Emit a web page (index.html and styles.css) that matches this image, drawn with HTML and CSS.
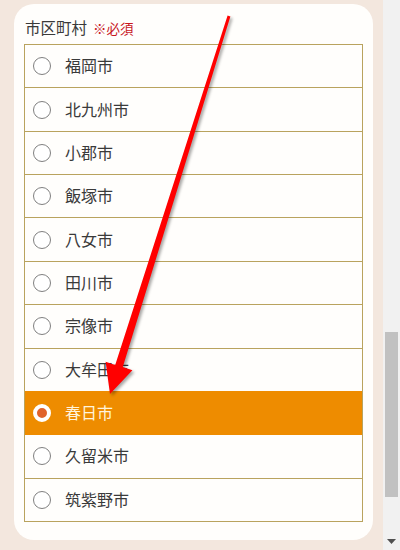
FILE: index.html
```html
<!DOCTYPE html>
<html lang="ja">
<head>
<meta charset="utf-8">
<link rel="stylesheet" href="styles.css">
</head>
<body>
<div class="page">
  <div class="card">
    <div class="head">市区町村<span class="req">※必須</span></div>
    <ul class="list">
      <li class="row"><span class="radio"></span>福岡市</li>
      <li class="row"><span class="radio"></span>北九州市</li>
      <li class="row"><span class="radio"></span>小郡市</li>
      <li class="row"><span class="radio"></span>飯塚市</li>
      <li class="row"><span class="radio"></span>八女市</li>
      <li class="row"><span class="radio"></span>田川市</li>
      <li class="row"><span class="radio"></span>宗像市</li>
      <li class="row"><span class="radio"></span>大牟田市</li>
      <li class="row selected"><span class="radio"></span>春日市</li>
      <li class="row"><span class="radio"></span>久留米市</li>
      <li class="row"><span class="radio"></span>筑紫野市</li>
    </ul>
  </div>
  <svg class="arrow" width="400" height="550" viewBox="0 0 400 550">
    <polygon points="230.4,16.4 227.6,15.6 115.2,365 105.6,361.8 110,394 132.4,370.2 122.8,367" fill="#ff0000"/>
  </svg>
</div>
<div class="scrollbar">
  <div class="track-top"></div>
  <div class="thumb"></div>
  <div class="track-bottom"></div>
  <div class="down">
    <svg width="9" height="5" viewBox="0 0 9 5"><polygon points="0,0 9,0 4.5,5" fill="#505050"/></svg>
  </div>
</div>
</body>
</html>
```
FILE: styles.css
```css
html, body {
  margin: 0;
  padding: 0;
}
body {
  width: 400px;
  height: 550px;
  display: flex;
  overflow: hidden;
  font-family: "Noto Sans CJK JP", "Noto Sans", sans-serif;
  color: #333;
}
.page {
  position: relative;
  width: 383px;
  height: 550px;
  background: #f3e7de;
  padding: 4px 10px 0 14px;
  box-sizing: border-box;
}
.card {
  background: #fffefc;
  border-radius: 20px;
  width: 359px;
  height: 536px;
  padding: 6px 10px 19px;
  box-sizing: border-box;
}
.head {
  height: 34px;
  line-height: 34px;
  font-size: 15.5px;
  padding-left: 1px;
  color: #3a3a3a;
}
.req {
  color: #c8161d;
  font-size: 13.5px;
  margin-left: 6px;
}
.list {
  list-style: none;
  margin: 0;
  padding: 0;
  border: 1px solid #b9a35e;
  border-bottom: none;
}
.row {
  height: 43.36px;
  box-sizing: border-box;
  border-bottom: 1px solid #b9a35e;
  display: flex;
  align-items: center;
  padding-left: 8px;
  padding-bottom: 2px;
  font-size: 16px;
  color: #3a3a3a;
}
.radio {
  width: 18px;
  height: 18px;
  box-sizing: border-box;
  border: 1.3px solid #808080;
  border-radius: 50%;
  background: #fff;
  margin-right: 14px;
  margin-top: 2px;
  flex: none;
}
.selected {
  background: #ee8c00;
  color: #fff4dc;
  border-bottom-color: #ee8c00;
  margin-top: -1px;
  height: 44.36px;
  padding-top: 1px;
}
.selected .radio {
  border: 4px solid #fff;
  background: #e0622b;
}
.arrow {
  position: absolute;
  left: 0;
  top: 0;
  filter: drop-shadow(2px 2px 1.5px rgba(0,0,0,0.35));
}
.scrollbar {
  width: 17px;
  height: 550px;
  background: #f1f1f1;
  display: flex;
  flex-direction: column;
  align-items: center;
}
.track-top {
  height: 332px;
}
.thumb {
  width: 13px;
  height: 165px;
  background: #c1c1c1;
}
.track-bottom {
  flex: 1;
}
.down {
  height: 17px;
  display: flex;
  align-items: center;
  justify-content: center;
}
.down svg {
  display: block;
}
```
